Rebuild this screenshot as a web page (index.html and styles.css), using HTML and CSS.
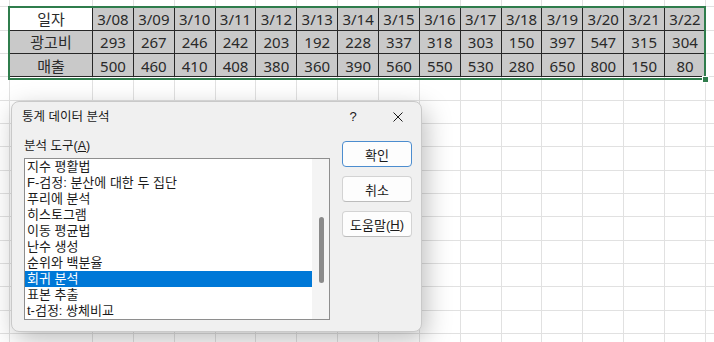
FILE: index.html
```html
<!DOCTYPE html>
<html lang="ko">

<head>
  <meta charset="UTF-8">
  <meta name="viewport" content="width=device-width, initial-scale=1.0">
  <title>통계 데이터 분석</title>
  <link rel="stylesheet" href="styles.css">
</head>

<body>
  <div class="sheet">
    <table class="grid">
      <colgroup>
        <col class="col-a"><col class="col-b">
        <col class="col-d"><col class="col-d"><col class="col-d"><col class="col-d"><col class="col-d">
        <col class="col-d"><col class="col-d"><col class="col-d"><col class="col-d"><col class="col-d">
        <col class="col-d"><col class="col-d"><col class="col-d"><col class="col-d"><col class="col-d">
        <col class="col-d">
      </colgroup>
      <tr><td></td><td></td><td></td><td></td><td></td><td></td><td></td><td></td><td></td><td></td><td></td><td></td><td></td><td></td><td></td><td></td><td></td><td></td></tr>
      <tr>
        <td></td>
        <td class="v blank">일자</td>
        <td class="v">3/08</td><td class="v">3/09</td><td class="v">3/10</td><td class="v">3/11</td><td class="v">3/12</td>
        <td class="v">3/13</td><td class="v">3/14</td><td class="v">3/15</td><td class="v">3/16</td><td class="v">3/17</td>
        <td class="v">3/18</td><td class="v">3/19</td><td class="v">3/20</td><td class="v">3/21</td><td class="v">3/22</td>
        <td></td>
      </tr>
      <tr>
        <td></td>
        <td class="v">광고비</td>
        <td class="v">293</td><td class="v">267</td><td class="v">246</td><td class="v">242</td><td class="v">203</td>
        <td class="v">192</td><td class="v">228</td><td class="v">337</td><td class="v">318</td><td class="v">303</td>
        <td class="v">150</td><td class="v">397</td><td class="v">547</td><td class="v">315</td><td class="v">304</td>
        <td></td>
      </tr>
      <tr>
        <td></td>
        <td class="v">매출</td>
        <td class="v">500</td><td class="v">460</td><td class="v">410</td><td class="v">408</td><td class="v">380</td>
        <td class="v">360</td><td class="v">390</td><td class="v">560</td><td class="v">550</td><td class="v">530</td>
        <td class="v">280</td><td class="v">650</td><td class="v">800</td><td class="v">150</td><td class="v">80</td>
        <td></td>
      </tr>
      <tr><td></td><td></td><td></td><td></td><td></td><td></td><td></td><td></td><td></td><td></td><td></td><td></td><td></td><td></td><td></td><td></td><td></td><td></td></tr>
      <tr><td></td><td></td><td></td><td></td><td></td><td></td><td></td><td></td><td></td><td></td><td></td><td></td><td></td><td></td><td></td><td></td><td></td><td></td></tr>
      <tr><td></td><td></td><td></td><td></td><td></td><td></td><td></td><td></td><td></td><td></td><td></td><td></td><td></td><td></td><td></td><td></td><td></td><td></td></tr>
      <tr><td></td><td></td><td></td><td></td><td></td><td></td><td></td><td></td><td></td><td></td><td></td><td></td><td></td><td></td><td></td><td></td><td></td><td></td></tr>
      <tr><td></td><td></td><td></td><td></td><td></td><td></td><td></td><td></td><td></td><td></td><td></td><td></td><td></td><td></td><td></td><td></td><td></td><td></td></tr>
      <tr><td></td><td></td><td></td><td></td><td></td><td></td><td></td><td></td><td></td><td></td><td></td><td></td><td></td><td></td><td></td><td></td><td></td><td></td></tr>
      <tr><td></td><td></td><td></td><td></td><td></td><td></td><td></td><td></td><td></td><td></td><td></td><td></td><td></td><td></td><td></td><td></td><td></td><td></td></tr>
      <tr><td></td><td></td><td></td><td></td><td></td><td></td><td></td><td></td><td></td><td></td><td></td><td></td><td></td><td></td><td></td><td></td><td></td><td></td></tr>
      <tr><td></td><td></td><td></td><td></td><td></td><td></td><td></td><td></td><td></td><td></td><td></td><td></td><td></td><td></td><td></td><td></td><td></td><td></td></tr>
      <tr><td></td><td></td><td></td><td></td><td></td><td></td><td></td><td></td><td></td><td></td><td></td><td></td><td></td><td></td><td></td><td></td><td></td><td></td></tr>
      <tr><td></td><td></td><td></td><td></td><td></td><td></td><td></td><td></td><td></td><td></td><td></td><td></td><td></td><td></td><td></td><td></td><td></td><td></td></tr>
      <tr><td></td><td></td><td></td><td></td><td></td><td></td><td></td><td></td><td></td><td></td><td></td><td></td><td></td><td></td><td></td><td></td><td></td><td></td></tr>
    </table>

    <div class="selection"><span class="handle"></span></div>

    <div class="dialog">
      <div class="titlebar">
        <span class="title">통계 데이터 분석</span>
        <span class="tb-btn help">?</span>
        <span class="tb-btn close">
          <svg width="10" height="10" viewBox="0 0 10 10"><path d="M0.5 0.5L9.5 9.5M9.5 0.5L0.5 9.5" stroke="#1b1b1b" stroke-width="1" fill="none"/></svg>
        </span>
      </div>
      <div class="dlg-body">
        <div class="tools">
          <div class="label">분석 도구(<u>A</u>)</div>
          <div class="listbox">
            <div class="items">
              <div class="item">지수 평활법</div>
              <div class="item">F-검정: 분산에 대한 두 집단</div>
              <div class="item">푸리에 분석</div>
              <div class="item">히스토그램</div>
              <div class="item">이동 평균법</div>
              <div class="item">난수 생성</div>
              <div class="item">순위와 백분율</div>
              <div class="item selected">회귀 분석</div>
              <div class="item">표본 추출</div>
              <div class="item">t-검정: 쌍체비교</div>
            </div>
            <div class="track"><div class="thumb"></div></div>
          </div>
        </div>
        <div class="buttons">
          <div class="btn default">확인</div>
          <div class="btn">취소</div>
          <div class="btn">도움말(<u>H</u>)</div>
        </div>
      </div>
    </div>
  </div>
</body>

</html>
```

FILE: styles.css
```css
body {
  margin: 0;
  padding: 0;
  background-color: #ffffff;
}

.sheet {
  position: relative;
  width: 714px;
  height: 342px;
  overflow: hidden;
  background-color: #ffffff;
}

/* spreadsheet grid */
.grid {
  border-collapse: separate;
  border-spacing: 0;
  table-layout: fixed;
  width: 778px;
  margin: -16px 0 0 -31px;
  font-family: "Noto Sans", "Noto Sans CJK KR", sans-serif;
  font-size: 15px;
  color: #2a2a2a;
}

.col-a { width: 41px; }
.col-b { width: 83px; }
.col-d { width: 40.87px; }

.grid tr {
  height: 23.33px;
}

.grid td {
  padding: 1px 0 0;
  line-height: 20px;
  text-align: center;
  white-space: nowrap;
  border-right: 1px solid #e1e1e1;
  border-bottom: 1px solid #e1e1e1;
}

.grid td.v {
  background-color: #c9c9c9;
  border-right-color: #262626;
  border-bottom-color: #262626;
}

.grid td.blank {
  background-color: #ffffff;
}

.selection {
  position: absolute;
  left: 8px;
  top: 6px;
  width: 698px;
  height: 74px;
  box-sizing: border-box;
  border: 2px solid #2f7d4c;
}

.selection .handle {
  position: absolute;
  right: -5px;
  bottom: -5px;
  width: 5px;
  height: 5px;
  background-color: #2f7d4c;
  border: 1px solid #ffffff;
}

/* dialog */
.dialog {
  position: absolute;
  left: 11px;
  top: 101px;
  width: 411px;
  height: 231px;
  box-sizing: border-box;
  background-color: #f0f0f0;
  border: 1px solid #c9c9c9;
  border-radius: 8px;
  box-shadow: 4px 8px 26px rgba(0, 0, 0, 0.26);
  font-family: "Liberation Sans", "Noto Sans CJK KR", sans-serif;
  font-size: 12.5px;
  color: #1b1b1b;
}

.titlebar {
  display: flex;
  align-items: center;
  height: 29px;
  padding-left: 10px;
}

.title {
  line-height: 16px;
}

.tb-btn {
  display: flex;
  align-items: center;
  justify-content: center;
  height: 29px;
}

.tb-btn.help {
  margin-left: auto;
  width: 44px;
  font-size: 13px;
}

.tb-btn.close {
  width: 46px;
}

.dlg-body {
  display: flex;
  padding: 7px 0 0 12px;
}

.tools {
  width: 306px;
}

.label {
  line-height: 16px;
  margin-bottom: 4px;
}

.listbox {
  display: flex;
  width: 306px;
  height: 162px;
  box-sizing: border-box;
  border: 1px solid #8e8e8e;
  background-color: #ffffff;
}

.items {
  flex: 1;
  overflow: hidden;
}

.item {
  height: 16px;
  line-height: 16px;
  padding-left: 2px;
  font-size: 13px;
  white-space: nowrap;
}

.item.selected {
  background-color: #0078d7;
  color: #ffffff;
}

.track {
  width: 17px;
  padding-top: 58px;
  background-color: #f4f4f4;
}

.thumb {
  width: 5px;
  height: 66px;
  margin-left: 7px;
  border-radius: 3px;
  background-color: #8a8a8a;
}

.buttons {
  display: flex;
  flex-direction: column;
  gap: 9px;
  margin: 3px 0 0 12px;
}

.btn {
  display: flex;
  align-items: center;
  justify-content: center;
  width: 70px;
  height: 26px;
  box-sizing: border-box;
  border: 1px solid #d3d3d3;
  border-bottom-color: #bcbcbc;
  border-radius: 4px;
  background-color: #fdfdfd;
  font-size: 13px;
}

.btn.default {
  border-color: #4c8dcf;
}
```
